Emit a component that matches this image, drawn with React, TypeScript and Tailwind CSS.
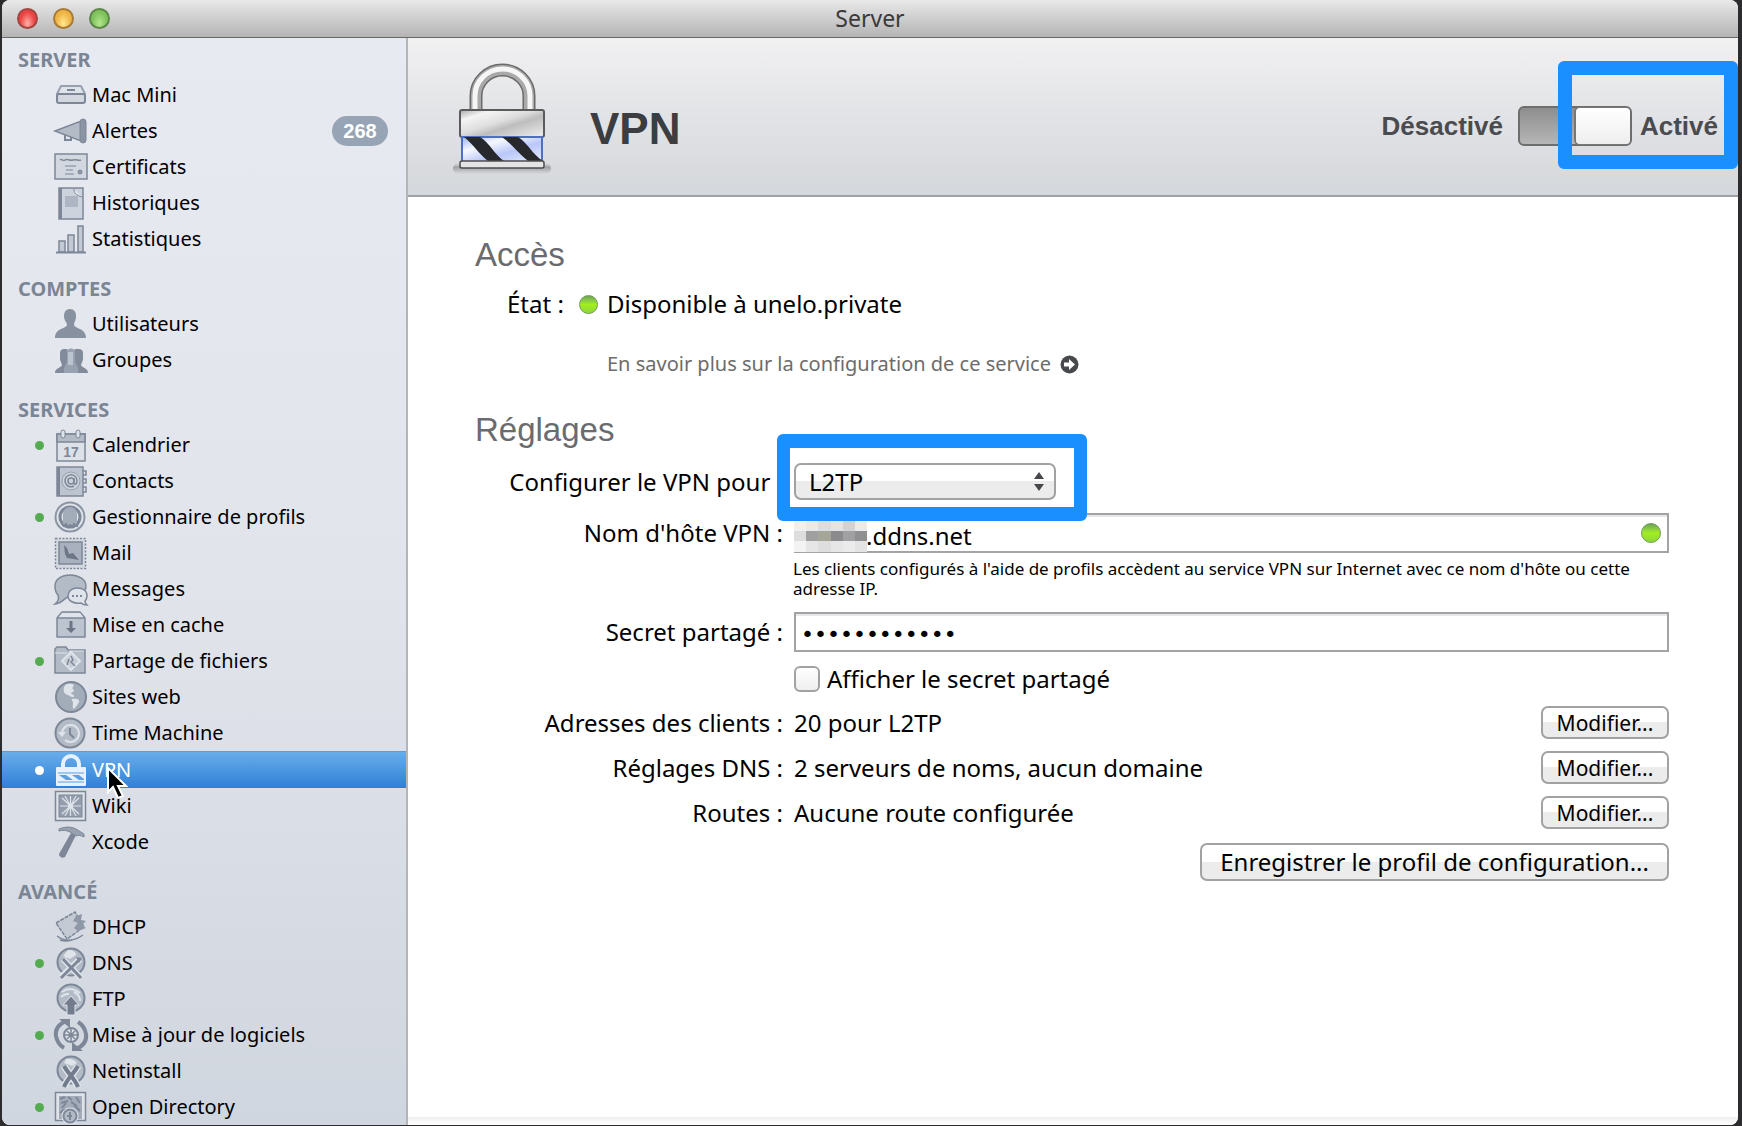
import { useState } from "react";
import type { ReactNode } from "react";

const S = "#7d8797";
const F = "#b3bbc7";
const L = "#dfe3ea";

const line = { stroke: S, strokeWidth: 2, fill: "none" } as const;
const solid = { stroke: S, strokeWidth: 2, fill: F } as const;

const icons: Record<string, ReactNode> = {
  mini: (
    <g>
      <path d="M7 7h20l4 8H3z" fill={L} stroke="#98a1af" strokeWidth="2" strokeLinejoin="round" />
      <rect x="3" y="15" width="28" height="9" rx="2" {...solid} fill="#d3d8e0" />
      <path d="M13 11h8" {...line} />
    </g>
  ),
  horn: (
    <g>
      <path d="M1 16 27 6v20z" {...solid} strokeWidth="1.5" />
      <path d="M11 20v5h6v-3" {...line} />
      <rect x="26" y="4" width="6" height="24" rx="3" fill="#8b94a3" stroke={S} />
    </g>
  ),
  cert: (
    <g>
      <rect x="1" y="3" width="32" height="25" fill="#d3d8e0" stroke={S} strokeWidth="1.5" />
      <path d="M6 9c2-2 3 2 5 0s4 1 8 0 5 1 8 0" {...line} strokeWidth="1.5" />
      <path d="M11 15h11M12 19h7M11 23h9" stroke="#98a1af" strokeWidth="1.5" />
      <circle cx="26" cy="21" r="2.500" fill="#8b94a3" />
    </g>
  ),
  book: (
    <g>
      <path d="M5 1h24v31H5z" fill="#cdd3dc" stroke={S} strokeWidth="1.5" />
      <path d="M5 1h3v31H5z" fill={S} />
      <path d="M11 9h13v11H11z" fill="#aeb6c3" />
      <path d="M20 2c0 4 2 6 8 8" stroke={S} fill="#e6e9ef" />
    </g>
  ),
  stats: (
    <g>
      <path d="M5 29V18h6v11zM14 29V12h6v17zM24 29V3h5v26z" {...solid} strokeWidth="1.5" fill="#c3cad4" />
      <path d="M2 29.500h30" {...line} />
    </g>
  ),
  user: (
    <path
      d="M16 1c4 0 6 3 6 7 0 5-2 6-2 9 1 4 12 3 12 13H1c0-10 11-9 12-13 0-3-3-4-3-9 0-4 2-7 6-7z"
      fill="#8791a0"
    />
  ),
  group: (
    <g>
      <path d="M6 9c0-3 2-4 4-4h3v24H1c0-5 6-5 7-8-1-3-2-4-2-7z" fill="#818b9a" />
      <path d="M29 9c0-3-2-4-4-4h-4v24h13c0-5-6-5-7-8 1-3 2-4 2-7z" fill="#818b9a" />
      <path d="M13 6c3-2 5-2 8 0v12l3 6v5H10v-5l3-6z" fill="#98a2b0" />
      <path d="M14 8h5v13h-5z" fill="#bcc4cf" />
    </g>
  ),
  calendar: (
    <g>
      <rect x="3" y="5" width="28" height="27" fill="#dde1e8" stroke={S} strokeWidth="1.5" />
      <path d="M3 5h28v8H3z" fill={F} stroke={S} strokeWidth="1.5" />
      <rect x="7" y="1" width="4" height="8" rx="2" fill={L} stroke={S} />
      <rect x="22" y="1" width="4" height="8" rx="2" fill={L} stroke={S} />
      <text x="17" y="28" textAnchor="middle" fontSize="14" fontWeight="700" fontFamily="Liberation Sans, sans-serif" fill={S}>
        17
      </text>
    </g>
  ),
  contacts: (
    <g>
      <rect x="3" y="2" width="26" height="29" fill="#bcc4cf" stroke={S} strokeWidth="1.5" />
      <path d="M3 2h3v29H3z" fill={S} />
      <path d="M29 6h3v4h-3M29 14h3v4h-3M29 22h3v5h-3" {...line} strokeWidth="1.5" />
      <circle cx="17" cy="16" r="9" fill="#cdd3dc" stroke="#98a1af" />
      <circle cx="17" cy="16" r="3" {...line} strokeWidth="1.5" />
      <path d="M20 13v5c0 2 3 2 3-2a6 6 0 1 0-3 5" {...line} strokeWidth="1.5" />
    </g>
  ),
  profiles: (
    <g>
      <circle cx="16" cy="16" r="14.500" fill={L} stroke="#8b94a3" strokeWidth="2" />
      <circle cx="16" cy="16" r="10" fill="none" stroke={S} strokeWidth="3" />
      <path d="M9 13a7 7 0 0 1 14 0v11H9z" fill="#a3acb9" />
      <path d="M8 23l2 2 2-2 2 3 2-2 3 2 1-3 3 2 1-3" fill="none" stroke={S} strokeWidth="2" />
    </g>
  ),
  mail: (
    <g>
      <rect x="1.500" y="1.500" width="30" height="30" fill="#d5dae2" stroke={S} strokeWidth="1.5" strokeDasharray="2 1.500" />
      <rect x="5" y="5" width="23" height="22" fill="#a9b1be" stroke={S} strokeWidth="1.5" />
      <path d="M10 8l3 3 2 6 4-1 6 7-6-1-6-1-2-4z" fill="#6d7787" />
    </g>
  ),
  messages: (
    <g>
      <path d="M16 2c8 0 16 4 16 11s-7 10-15 10c-5-1-7 7-16 8 4-3 4-6 3-9-2-2-3-5-3-9C1 6 8 2 16 2z" fill={F} stroke={S} strokeWidth="1.5" />
      <path d="M23 15c6 0 10 3 10 8 0 3-1 4-2 5 0 2 1 3 2 4-3 0-5-1-6-2-7 1-13-2-13-7s4-8 9-8z" fill={L} stroke={S} strokeWidth="1.5" />
      <path d="M18 23h2M22 23h2M26 23h2" {...line} />
    </g>
  ),
  cache: (
    <g>
      <path d="M8 3h18l5 6v19H3V9z" fill="#bcc4cf" stroke={S} strokeWidth="1.5" strokeLinejoin="round" />
      <path d="M8 4h18l4 5H4z" fill={L} />
      <path d="M3 9h28" {...line} strokeWidth="1.5" />
      <path d="M17 12v8" stroke="#6b7585" strokeWidth="3" />
      <path d="M12 19h10l-5 5z" fill="#6b7585" />
    </g>
  ),
  folder: (
    <g>
      <path d="M1 4l2-2h9l2 3h17v23H1z" fill={F} stroke={S} strokeWidth="1.5" />
      <path d="M1 8h12M15 6h15" stroke={L} strokeWidth="1" />
      <path d="M17 7l9 9-9 9-9-9z" fill="#c9cfd8" stroke={L} strokeWidth="2" />
      <path d="M17 11l2 4-2 2 4 4M15 14l-2 6" {...line} strokeWidth="1.5" />
    </g>
  ),
  globe: (
    <g>
      <circle cx="17" cy="16" r="15" fill="#a3acb9" stroke={S} strokeWidth="2" />
      <path d="M13 3c6-1 8 1 6 3s2 3 1 4-2 1-3 2 3 1 3 3-3 1-4 0-5-1-6-4 0-7 3-8zM18 18c5-1 8 1 7 3s-3 5-5 7c-2-1-1-4-1-6s-2-3-1-4z" fill={L} />
    </g>
  ),
  time: (
    <g>
      <circle cx="16" cy="16" r="14.500" fill={F} stroke={S} strokeWidth="2" />
      <path d="M8 16a8.500 8.500 0 1 1 3 7" stroke={L} strokeWidth="2" fill="none" />
      <path d="M4 15h8l-4 5z" fill={L} />
      <path d="M16 11v6l4 4" {...line} />
    </g>
  ),
  lock: (
    <g>
      <path d="M9 14V10a8 8 0 0 1 16 0v4" fill="none" stroke="#e6f2ff" strokeWidth="4" />
      <rect x="2" y="13" width="30" height="19" rx="1" fill="#e6f2ff" />
      <path d="M4 19h26M4 28h26" stroke="#8bbcec" strokeWidth="1.5" />
      <path d="M5 21h7l7 5h-7zM18 21h7l5 4v1h-5z" fill="#5c9fe2" />
    </g>
  ),
  wiki: (
    <g>
      <rect x="1.500" y="1.500" width="30" height="29" fill={L} stroke={S} strokeWidth="1.5" />
      <rect x="5" y="5" width="23" height="22" fill="#939dac" stroke={S} />
      <path d="M16.500 6v20M6 16h21M8 8l17 16M25 8 8 24M11 6l11 20M22 6 11 26" stroke={L} strokeWidth="1.2" />
      <circle cx="16.500" cy="16" r="2.500" fill={L} />
    </g>
  ),
  hammer: (
    <g>
      <path d="M17 7l5 2-11 22c-2 2-6 0-6-3z" fill="#7d8797" />
      <path d="M5 3c8-3 13-2 17 0l8 5v3c-4-2-6-2-8-1l-6-4c-4-2-7-2-11-1z" fill="#98a1af" stroke={S} />
    </g>
  ),
  dhcp: (
    <g>
      <path d="M2 12 21 1l9 15-17 12z" fill="#c3cad4" stroke={S} strokeWidth="1.5" strokeDasharray="4 1" />
      <path d="M22 5l6-2-1 6 5 1-4 4 4 3-8 3-4-3 4-5-5-2z" fill="#8f98a7" />
      <path d="M3 25c8 6 16 6 26-1M6 29c5 2 9 1 12 0" {...line} strokeWidth="1.5" />
    </g>
  ),
  dns: (
    <g>
      <circle cx="17" cy="15" r="13.500" fill={F} stroke={S} strokeWidth="2" />
      <path d="M14 3c5 0 8 2 8 5l-6 4-7-3z" fill={L} />
      <path d="M7 30 26 12M27 31 9 12" stroke={L} strokeWidth="6" />
      <path d="M7 31 26 12M27 31 9 12" stroke={S} strokeWidth="3" />
      <path d="M22 10l6 1-3 5z" fill={S} />
    </g>
  ),
  ftp: (
    <g>
      <circle cx="17" cy="15" r="13.500" fill={F} stroke={S} strokeWidth="2" />
      <path d="M8 9c5-4 12-4 18 1M7 14c4-4 6-3 8-3M20 9c4 2 6 5 6 9" stroke={L} strokeWidth="2" fill="none" />
      <path d="M17 13l8 9h-4v10h-8V22H9z" fill="#727c8c" stroke={L} />
    </g>
  ),
  update: (
    <g>
      <path d="M12 2C5 5 1 10 2 17c1 6 3 9 8 12" stroke={S} strokeWidth="4" fill="none" />
      <path d="M22 30c7-3 11-8 10-15-1-6-3-9-8-12" stroke={S} strokeWidth="4" fill="none" />
      <path d="M5 0h11v9zM29 32H18v-9z" fill={S} />
      <circle cx="17" cy="16" r="7" fill={L} stroke={S} strokeWidth="2" />
      <path d="M17 10v12M11 16h12M13 12l8 8M21 12l-8 8" stroke={S} strokeWidth="1.5" />
    </g>
  ),
  netinstall: (
    <g>
      <circle cx="17" cy="15" r="13.500" fill={F} stroke={S} strokeWidth="2" />
      <path d="M12 4c5-1 9 1 11 4l-5 3-8-3z" fill={L} />
      <path d="M10 11c3 6 11 13 14 21M24 11c-3 6-11 13-14 21" stroke={L} strokeWidth="7" fill="none" />
      <path d="M10 11c3 6 11 13 14 21M24 11c-3 6-11 13-14 21" stroke="#727c8c" strokeWidth="4" fill="none" />
    </g>
  ),
  directory: (
    <g>
      <path d="M1.500 1.500h30v28h-30z" fill={L} stroke={S} strokeWidth="1.5" />
      <path d="M5 5h23v23H5z" fill="#a3acb9" />
      <path d="M6 8l5-2M14 6l4 3M22 6l4 6M7 12l7-2M8 17l4-5M17 11l6 4M20 14l6 6M6 22l5-4" {...line} />
      <circle cx="16" cy="25" r="8.500" fill={L} />
      <circle cx="16" cy="25" r="6.500" fill={F} stroke={S} strokeWidth="2" />
      <path d="M16 21v8M13 25h5" {...line} />
    </g>
  ),
};

type Item = { label: string; icon: string; on?: boolean; badge?: string; selected?: boolean };

const groups: { title: string; items: Item[] }[] = [
  {
    title: "SERVER",
    items: [
      { label: "Mac Mini", icon: "mini" },
      { label: "Alertes", icon: "horn", badge: "268" },
      { label: "Certificats", icon: "cert" },
      { label: "Historiques", icon: "book" },
      { label: "Statistiques", icon: "stats" },
    ],
  },
  {
    title: "COMPTES",
    items: [
      { label: "Utilisateurs", icon: "user" },
      { label: "Groupes", icon: "group" },
    ],
  },
  {
    title: "SERVICES",
    items: [
      { label: "Calendrier", icon: "calendar", on: true },
      { label: "Contacts", icon: "contacts" },
      { label: "Gestionnaire de profils", icon: "profiles", on: true },
      { label: "Mail", icon: "mail" },
      { label: "Messages", icon: "messages" },
      { label: "Mise en cache", icon: "cache" },
      { label: "Partage de fichiers", icon: "folder", on: true },
      { label: "Sites web", icon: "globe" },
      { label: "Time Machine", icon: "time" },
      { label: "VPN", icon: "lock", on: true, selected: true },
      { label: "Wiki", icon: "wiki" },
      { label: "Xcode", icon: "hammer" },
    ],
  },
  {
    title: "AVANCÉ",
    items: [
      { label: "DHCP", icon: "dhcp" },
      { label: "DNS", icon: "dns", on: true },
      { label: "FTP", icon: "ftp" },
      { label: "Mise à jour de logiciels", icon: "update", on: true },
      { label: "Netinstall", icon: "netinstall" },
      { label: "Open Directory", icon: "directory", on: true },
    ],
  },
];

function Pointer() {
  return (
    <svg className="pointer-events-none absolute top-4 left-[104px] z-10 h-[32px] w-[22px]" viewBox="0 0 22 32" aria-hidden="true">
      <path d="M2 1v24l5-5 5 11 5-2-5-10h8z" fill="#000" stroke="#fff" strokeWidth="2" />
    </svg>
  );
}

function SidebarRow({ item }: { item: Item }) {
  const sel = item.selected;
  return (
    <li className="relative">
      <a
        href="#"
        aria-current={sel ? "page" : undefined}
        className={
          sel
            ? "flex h-[37px] items-center border-t border-[#5a9cdc] bg-linear-to-b from-[#68adea] to-[#3080d8] pr-[18px] pl-[33px] text-white"
            : "flex h-9 items-center pr-[18px] pl-[33px] text-black"
        }
      >
        <span
          className={
            sel
              ? "size-[9px] rounded-full bg-white"
              : item.on
                ? "size-[9px] rounded-full bg-[#55ab50]"
                : "size-[9px]"
          }
        />
        <svg className="ml-[10px] h-[33px] w-[34px] overflow-visible" viewBox="0 0 34 33" aria-hidden="true">
          {icons[item.icon]}
        </svg>
        <span className="ml-1">{item.label}</span>
        {item.badge && (
          <span className="ml-auto flex h-[30px] w-14 items-center justify-center rounded-full bg-[#97a4b5] font-['Liberation_Sans',sans-serif] text-xl font-bold text-white">
            {item.badge}
          </span>
        )}
      </a>
      {sel && <Pointer />}
    </li>
  );
}

function Sidebar() {
  return (
    <nav className="w-[406px] shrink-0 border-r-2 border-[#b4b5b8] bg-linear-to-b from-[#e8eaf1] via-[#e2e4eb] to-[#d0d6df] pt-[7px] text-[20px]">
      {groups.map((g, i) => (
        <section key={g.title} className={i ? "mt-[17px]" : ""}>
          <h2 className="flex h-8 items-center pb-0.5 pl-4 font-bold text-[#7a8595]">{g.title}</h2>
          <ul>
            {g.items.map((it) => (
              <SidebarRow key={it.label} item={it} />
            ))}
          </ul>
        </section>
      ))}
    </nav>
  );
}

function BigLock() {
  return (
    <svg className="h-[116px] w-[100px] shrink-0" viewBox="0 0 100 116" aria-hidden="true">
      <defs>
        <linearGradient id="metal" x1="0" y1="0" x2="1" y2="1">
          <stop offset="0" stopColor="#a9a9a9" />
          <stop offset=".2" stopColor="#f4f4f4" />
          <stop offset=".45" stopColor="#dedede" />
          <stop offset=".6" stopColor="#bdbdbd" />
          <stop offset="1" stopColor="#efefef" />
        </linearGradient>
        <linearGradient id="glass" x1="0" y1="0" x2="1" y2="1">
          <stop offset="0" stopColor="#9db4ec" />
          <stop offset=".3" stopColor="#f6f8ff" />
          <stop offset=".6" stopColor="#b9c7f8" />
          <stop offset="1" stopColor="#e8eeff" />
        </linearGradient>
        <linearGradient id="shade" x1="0" y1="0" x2="0" y2="1">
          <stop offset="0" stopColor="#777" stopOpacity="0" />
          <stop offset=".4" stopColor="#666" stopOpacity=".5" />
          <stop offset="1" stopColor="#777" stopOpacity="0" />
        </linearGradient>
      </defs>
      <rect x="1" y="104" width="98" height="11" rx="6" fill="url(#shade)" />
      <path d="M24 52V37a26.500 26 0 0 1 53 0v15" fill="none" stroke="#6b6b6b" strokeWidth="13" />
      <path d="M24 52V37a26.500 26 0 0 1 53 0v15" fill="none" stroke="#a9a9a9" strokeWidth="10" />
      <path d="M23 52V37a27.500 27 0 0 1 55 0v15" fill="none" stroke="#f6f6f6" strokeWidth="5" />
      <rect x="8" y="51" width="84" height="27" rx="2" fill="url(#metal)" stroke="#5b5b5b" strokeWidth="2" />
      <rect x="10" y="78" width="80" height="25" fill="url(#glass)" stroke="#4f70bd" strokeWidth="2" />
      <path d="M12 78h16c9 5 14 17 24 24H36C27 95 21 85 12 78zM50 78h16c9 5 14 17 25 24H76C67 95 60 85 50 78z" fill="#26282c" />
      <rect x="8" y="102" width="84" height="7" rx="2" fill="#e4e4e4" stroke="#4c4c4c" strokeWidth="1.500" />
    </svg>
  );
}

function Header({ on, onToggle }: { on: boolean; onToggle: () => void }) {
  return (
    <header className="flex h-[159px] items-center border-b-2 border-[#a0a1a4] bg-linear-to-b from-[#f1f1f2] via-[#e2e3e6] to-[#d4d7db] pl-11 font-['Liberation_Sans',Arial,sans-serif]">
      <BigLock />
      <h1 className="ml-[38px] pt-6 text-[44px] leading-[48px] font-bold text-[#3b3d41]">VPN</h1>
      <div className="relative mr-5 ml-auto flex items-center pt-[18px] text-[26px] leading-[30px] font-bold text-[#4a4b4f]">
        <span>Désactivé</span>
        <button
          type="button"
          role="switch"
          aria-checked={on}
          aria-label="Activé"
          onClick={onToggle}
          className={
            on
              ? "ml-[15px] flex h-10 w-[114px] justify-end rounded-md border-2 border-[#6d6d6d] bg-linear-to-b from-[#8e8e8e] to-[#b6b6b6]"
              : "ml-[15px] flex h-10 w-[114px] justify-start rounded-md border-2 border-[#6d6d6d] bg-linear-to-b from-[#8e8e8e] to-[#b6b6b6]"
          }
        >
          <span className="h-9 w-[54px] rounded-[4px] bg-linear-to-b from-white to-[#eeeeee] shadow-[-1px_0_0_1px_#777]" />
        </button>
        <span className="ml-2">Activé</span>
        <div className="pointer-events-none absolute -top-[27px] -right-5 h-[108px] w-[180px] rounded-md border-14 border-[#1a8fff]" />
      </div>
    </header>
  );
}

const mosaic = [
  "bg-[#f0f0f0]", "bg-[#e9e9ea]", "bg-[#dcdde2]", "bg-[#e4e4e6]", "bg-[#d2d3d6]", "bg-[#ebebec]",
  "bg-[#dddddc]", "bg-[#a0a0a0]", "bg-[#a6a698]", "bg-[#8b8b8d]", "bg-[#a0a0a2]", "bg-[#8f8f91]",
  "bg-[#f3f3f3]", "bg-[#e6e6e6]", "bg-[#dedede]", "bg-[#e6e6e6]", "bg-[#ebebeb]", "bg-[#e3e3e3]",
];

const field = "w-full border-2 border-[#a3a3a6] bg-white shadow-[inset_0_2px_0_#e8e8ea] outline-none";
const push = "rounded-[7px] border-2 border-[#a2a2a2] bg-linear-to-b from-white from-50% to-[#ececec] to-50% text-black";

function Row({ label, htmlFor, children, className }: { label: string; htmlFor?: string; children: ReactNode; className: string }) {
  return (
    <div className={`grid grid-cols-[308px_1fr] items-center gap-x-[11px] ${className}`}>
      {htmlFor ? (
        <label htmlFor={htmlFor} className="text-right whitespace-nowrap">{label}</label>
      ) : (
        <span className="text-right whitespace-nowrap">{label}</span>
      )}
      {children}
    </div>
  );
}

function Orb({ className }: { className: string }) {
  return (
    <span
      className={`rounded-full border border-[#6f9a58] bg-linear-to-b from-[#6fa552] via-[#a2ee1c] to-[#8fd63a] ${className}`}
    />
  );
}

const summaries = [
  { label: "Adresses des clients :", value: "20 pour L2TP" },
  { label: "Réglages DNS :", value: "2 serveurs de noms, aucun domaine" },
  { label: "Routes :", value: "Aucune route configurée" },
];

function Settings() {
  const [show, setShow] = useState(false);
  const [secret, setSecret] = useState("secretsecret");
  const [host, setHost] = useState(".ddns.net");
  return (
    <main className="flex-1 pt-[38px] pr-[69px] pl-[67px] text-2xl leading-[30px]">
      <h2 className="font-['Liberation_Sans',Arial,sans-serif] text-[33px] leading-10 text-[#6a6b6e]">Accès</h2>
      <div className="mt-[14px] flex items-center pl-8">
        <span className="w-[57px] whitespace-nowrap">État :</span>
        <Orb className="ml-[15px] size-[19px]" />
        <span className="ml-[9px]">Disponible à unelo.private</span>
      </div>
      <a href="#" className="mt-[30px] ml-[132px] flex items-center text-xl leading-[30px] text-[#6c6c6c]">
        En savoir plus sur la configuration de ce service
        <svg className="ml-[9px] size-[19px]" viewBox="0 0 19 19" aria-hidden="true">
          <circle cx="9.500" cy="9.500" r="9" fill="#48494c" />
          <path d="M4 7.500h5V4l6 5.500L9 15v-3.500H4z" fill="#fff" />
        </svg>
      </a>

      <h2 className="mt-[31px] font-['Liberation_Sans',Arial,sans-serif] text-[33px] leading-10 text-[#6a6b6e]">Réglages</h2>
      <Row label="Configurer le VPN pour :" htmlFor="protocol" className="mt-[13px]">
        <div className="relative w-[262px]">
          <select
            id="protocol"
            className="block h-[37px] w-full appearance-none rounded-[7px] border-2 border-[#a2a2a2] bg-linear-to-b from-white from-50% to-[#ececec] to-50% pl-[13px] text-2xl leading-[30px]"
          >
            <option>L2TP</option>
            <option>PPTP</option>
          </select>
          <svg className="pointer-events-none absolute top-[9px] right-3 h-5 w-[10px]" viewBox="0 0 10 20" aria-hidden="true">
            <path d="M5 0l5 7H0zM5 19l5-7H0z" fill="#47484b" />
          </svg>
          <div className="pointer-events-none absolute -top-[29px] -right-[31px] -bottom-[21px] -left-[17px] z-10 rounded-md border-x-13 border-y-14 border-[#1a8fff]" />
        </div>
      </Row>
      <Row label="Nom d'hôte VPN :" htmlFor="host" className="mt-[13px]">
        <div className="relative">
          <input
            id="host"
            value={host}
            onChange={(e) => setHost(e.target.value)}
            className={`${field} block h-10 pt-1 pl-[70px]`}
          />
          <div className="absolute top-[7px] left-0 grid h-8 w-[73px] grid-cols-6">
            {mosaic.map((c, i) => (
              <span key={i} className={c} />
            ))}
          </div>
          <Orb className="absolute top-[10px] right-2 size-[20px]" />
        </div>
      </Row>
      <p className="mt-[6px] ml-[318px] text-[17px] leading-5">
        Les clients configurés à l'aide de profils accèdent au service VPN sur Internet avec ce nom d'hôte ou cette
        adresse IP.
      </p>
      <Row label="Secret partagé :" htmlFor="secret" className="mt-[13px]">
        <input
          id="secret"
          type={show ? "text" : "password"}
          value={secret}
          onChange={(e) => setSecret(e.target.value)}
          className={`${field} h-10 px-[5px] pt-1 font-['DejaVu_Sans',sans-serif] text-[22px]`}
        />
      </Row>
      <label className="mt-[13px] ml-[319px] flex h-7 items-center">
        <input
          type="checkbox"
          checked={show}
          onChange={(e) => setShow(e.target.checked)}
          className="size-[26px] appearance-none rounded-[6px] border-2 border-[#a2a2a2] bg-linear-to-b from-white to-[#efefef] checked:bg-[#4a90d9]"
        />
        <span className="ml-[7px]">Afficher le secret partagé</span>
      </label>
      <div className="mt-[13px] flex flex-col gap-3">
        {summaries.map((s) => (
          <Row key={s.label} label={s.label} className="">
            <div className="flex items-center justify-between">
              <span>{s.value}</span>
              <button type="button" className={`${push} h-[33px] w-[128px] text-[21px] leading-6`}>
                Modifier...
              </button>
            </div>
          </Row>
        ))}
      </div>
      <div className="mt-[14px] flex justify-end">
        <button type="button" className={`${push} h-[38px] px-[18px] leading-[30px]`}>
          Enregistrer le profil de configuration...
        </button>
      </div>
    </main>
  );
}

export default function App() {
  const [on, setOn] = useState(true);
  return (
    <div className="flex min-h-screen flex-col bg-[#2c2c2e] pr-1 pb-px pl-0.5 font-['Noto_Sans','Open_Sans',sans-serif] text-black">
      <div className="flex flex-1 flex-col overflow-hidden rounded-lg bg-white">
        <div className="relative flex h-[38px] items-center justify-center border-b border-[#686868] bg-linear-to-b from-[#e9e9e9] to-[#b4b4b4]">
          <div className="absolute left-[15px] flex gap-[15px]">
            <button type="button" aria-label="Fermer" className="size-[21px] rounded-full border-2 border-[#a34540] bg-radial-[at_50%_80%] from-[#ffb0a5] to-[#ec4444] to-60%" />
            <button type="button" aria-label="Réduire" className="size-[21px] rounded-full border-2 border-[#a97a35] bg-radial-[at_50%_80%] from-[#ffe98e] to-[#eeb444] to-60%" />
            <button type="button" aria-label="Agrandir" className="size-[21px] rounded-full border-2 border-[#5c8746] bg-radial-[at_50%_80%] from-[#b5e78e] to-[#7fc25c] to-60%" />
          </div>
          <span className="pb-0.5 text-[23px] leading-7 text-[#3a3a3a]">Server</span>
        </div>
        <div className="flex flex-1">
          <Sidebar />
          <div className="flex min-w-0 flex-1 flex-col">
            <Header on={on} onToggle={() => setOn(!on)} />
            <Settings />
            <div className="h-2 bg-linear-to-b from-[#f0f0f0] to-white" />
          </div>
        </div>
      </div>
    </div>
  );
}
